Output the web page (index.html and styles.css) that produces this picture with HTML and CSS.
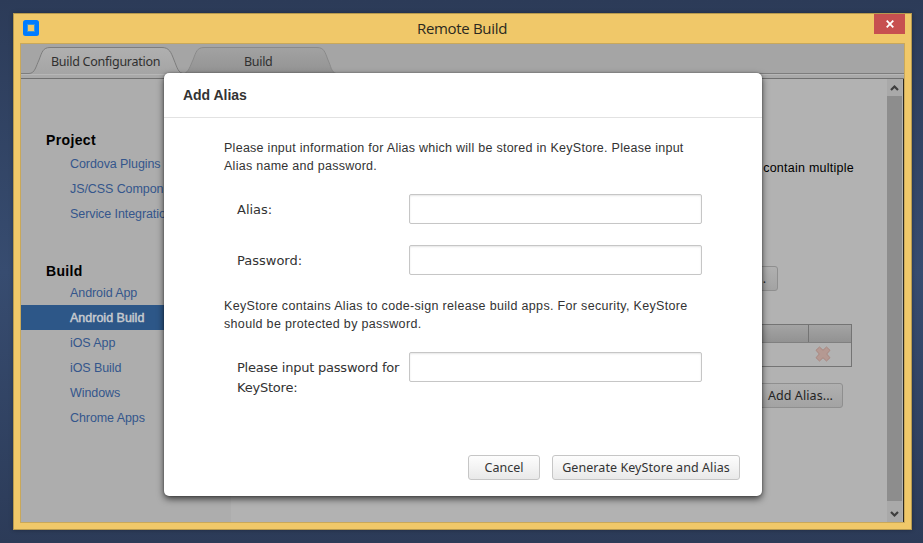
FILE: index.html
```html
<!DOCTYPE html>
<html lang="en">
<head>
<meta charset="utf-8">
<title>Remote Build</title>
<link rel="stylesheet" href="styles.css">
</head>
<body>
<div class="window">
  <header class="titlebar">
    <svg class="app-icon" width="16" height="16" viewBox="0 0 16 16"><rect width="16" height="16" rx="2.500" fill="#007cff"/><rect x="4.500" y="4.500" width="7" height="7" fill="#f0c869" stroke="#3c96d8"/></svg>
    <h1 class="window-title">Remote Build</h1>
    <button class="close" aria-label="Close"><svg width="8" height="8" viewBox="0 0 8 8"><path d="M.7.7l6.600 6.600M7.300.7L.7 7.300" stroke="#fff" stroke-width="1.800"/></svg></button>
  </header>
  <div class="client">
    <nav class="tabs">
      <svg class="tab-shapes" width="883" height="35" viewBox="0 0 883 35">
        <defs>
          <linearGradient id="active" x2="0" y2="1"><stop stop-color="#b0b0b0"/><stop offset="1" stop-color="#a5a5a5"/></linearGradient>
          <linearGradient id="idle" x2="0" y2="1"><stop stop-color="#a2a2a2"/><stop offset="1" stop-color="#939393"/></linearGradient>
        </defs>
        <rect y="30" width="883" height="4" fill="#a9a9a9"/>
        <path d="M163 29.500C168 28 169 22 172 16C175 8 176 3.500 183 3.500H296C303 3.500 304 8 307 16C310 22 310 28 315 29.500" fill="url(#idle)" stroke="#8a8a8a"/>
        <path d="M0 29.500H8C14 29.500 15 22 18 16C21 8 22 3.500 29 3.500H141C148 3.500 150 8 153 16C156 23 157 29.500 163 29.500H883" fill="url(#active)" stroke="#7d7d7d"/>
        <path d="M0 30.500H883" stroke="#b7b7b7"/>
        <path d="M0 34.500H883" stroke="#707070"/>
      </svg>
      <span class="tab tab-config">Build Configuration</span>
      <span class="tab tab-build">Build</span>
    </nav>
    <div class="workspace">
      <aside class="sidebar">
        <section class="group">
          <h2>Project</h2>
          <a>Cordova Plugins</a>
          <a>JS/CSS Compon</a>
          <a>Service Integratio</a>
        </section>
        <section class="group build">
          <h2>Build</h2>
          <a>Android App</a>
          <a class="selected">Android Build</a>
          <a>iOS App</a>
          <a>iOS Build</a>
          <a>Windows</a>
          <a>Chrome Apps</a>
        </section>
      </aside>
      <main class="content">
        <p class="hint">contain multiple</p>
        <button class="btn dim more">.</button>
        <div class="table">
          <div class="table-head"><span></span><span></span></div>
          <div class="table-row"><svg width="16" height="16" viewBox="0 0 16 16"><path d="M4.500 1L8 4.300 11.500 1 15 4.300 11.700 8 15 11.700 11.500 15 8 11.700 4.500 15 1 11.700 4.300 8 1 4.300Z" fill="#b59992" stroke="#a98780" stroke-linejoin="round"/></svg></div>
        </div>
        <button class="btn dim add">Add Alias...</button>
      </main>
      <div class="scrollbar">
        <svg class="up" width="15" height="17" viewBox="0 0 15 17"><path d="M4 11L7.500 7.500 11 11" fill="none" stroke="#3e3e3e" stroke-width="2.200"/></svg>
        <svg class="down" width="15" height="21" viewBox="0 0 15 21"><path d="M4 11L7.500 14.500 11 11" fill="none" stroke="#3e3e3e" stroke-width="2.200"/></svg>
      </div>
    </div>
  </div>
</div>
<div class="dialog" role="dialog">
  <h2 class="dialog-title">Add Alias</h2>
  <div class="dialog-body">
    <p class="intro">Please input information for Alias which will be stored in KeyStore. Please input<br>Alias name and password.</p>
    <label class="field"><span>Alias:</span><input type="text"></label>
    <label class="field second"><span>Password:</span><input type="password"></label>
    <p class="note">KeyStore contains Alias to code-sign release build apps. For security, KeyStore<br>should be protected by password.</p>
    <label class="field third"><span>Please input password for<br>KeyStore:</span><input type="password"></label>
  </div>
  <footer class="actions">
    <button class="btn cancel">Cancel</button>
    <button class="btn generate">Generate KeyStore and Alias</button>
  </footer>
</div>
</body>
</html>
```
FILE: styles.css
```css
* { box-sizing: border-box; }
h1, h2, p { margin: 0; font-weight: normal; }
body {
  margin: 0;
  padding: 13px 11px 13px 13px;
  height: 543px;
  overflow: hidden;
  background: linear-gradient(#2c3b58, #374c70 50%, #2c3b58);
  font: 12.500px/18px "Liberation Sans", sans-serif;
}
button { padding: 0; margin: 0; }
.window {
  height: 517px;
  border: 1px solid #b6994e;
  background: #f0c869;
  padding: 0 6px 6px;
  box-shadow: 0 0 4px rgba(0, 0, 0, .3);
}
.titlebar {
  display: flex;
  height: 29px;
  padding-left: 3px;
}
.app-icon { margin-top: 6px; }
.window-title {
  flex: 1;
  padding-left: 11px;
  font: 15px/28px "Open Sans", sans-serif;
  letter-spacing: -.32px;
  text-align: center;
  color: #2b2820;
}
.close {
  width: 31px;
  height: 20px;
  display: grid;
  place-items: center;
  border: 0;
  background: #c75050;
}
.client {
  height: 480px;
  border: 1px solid #c9a85a;
  background: #adadad;
}
.tabs {
  display: grid;
  grid-template-columns: 140px 193px 1fr;
  height: 35px;
  background: #a5a5a5;
}
.tab-shapes { grid-area: 1 / 1 / 2 / 4; }
.tab {
  grid-row: 1;
  font: 12.500px/18px "Noto Sans", sans-serif;
  color: #303030;
  padding-top: 9px;
  z-index: 1;
}
.tab-config {
  grid-column: 1;
  padding-left: 30px;
  letter-spacing: -.27px;
  white-space: nowrap;
}
.tab-build { grid-column: 2; padding-left: 83px; letter-spacing: -.3px; }
.workspace {
  display: flex;
  height: 443px;
  background: #b2b2b2;
}
.sidebar {
  width: 210px;
  padding-top: 50px;
  background: #adadad;
}
.group { height: 131px; }
.group h2 {
  height: 22px;
  padding-left: 25px;
  font: bold 14px/22px "Liberation Sans", sans-serif;
  letter-spacing: .35px;
  color: #000;
}
.group.build h2 { height: 20px; }
.group a {
  display: block;
  height: 25px;
  padding-left: 49px;
  line-height: 26px;
  letter-spacing: -.08px;
  color: #34568c;
}
.group a.selected {
  background: #2d5788;
  color: #c5c9ce;
  letter-spacing: 0;
  -webkit-text-stroke: .5px #c5c9ce;
}
.content {
  flex: 1;
  display: flex;
  flex-direction: column;
  align-items: flex-end;
  padding: 80px 35px 0 0;
}
.hint {
  height: 107px;
  margin-right: -2px;
  letter-spacing: .25px;
  color: #000;
}
.btn {
  height: 25px;
  border: 1px solid #c6c6c6;
  border-radius: 3px;
  background: linear-gradient(#fdfdfd, #e9e9e9);
  font: 12.500px/22px "Noto Sans", sans-serif;
  color: #333;
  white-space: nowrap;
}
.dim {
  border-color: #8f8f8f;
  background: linear-gradient(#b0b0b0, #a3a3a3);
  color: #242424;
}
.more {
  width: 90px;
  margin-right: 74px;
  padding-right: 11px;
  text-align: right;
}
.table {
  width: 500px;
  height: 43px;
  margin-top: 33px;
  border: 1px solid #747474;
}
.table-head {
  display: flex;
  justify-content: flex-end;
  height: 18px;
  border-bottom: 1px solid #808080;
  background: linear-gradient(#a4a4a4, #929292);
}
.table-head span:last-child {
  width: 43px;
  border-left: 1px solid #747474;
}
.table-row { text-align: right; padding: 3px 20px 0 0; }
.table-row svg { display: inline-block; }
.add {
  width: 100px;
  margin: 16px 9px 0 0;
  padding-right: 9px;
  letter-spacing: .08px;
  text-align: right;
}
.scrollbar {
  width: 17px;
  display: flex;
  flex-direction: column;
  justify-content: space-between;
  border-right: 1px solid #2c2820;
  background: linear-gradient(90deg, #8d8d8d 15px, #b2b2b2 15px);
}
.scrollbar svg { display: block; background: #a9a9a9; }
.dialog {
  position: absolute;
  left: 164px;
  top: 73px;
  width: 598px;
  height: 423px;
  border-radius: 5px;
  background: #fff;
  box-shadow: 0 3px 7px rgba(0, 0, 0, .65), 0 0 2px rgba(0, 0, 0, .4);
  color: #333;
}
.dialog-title {
  height: 45px;
  padding-left: 19px;
  border-bottom: 1px solid #e2e2e2;
  font: bold 14px/45px "Liberation Sans", sans-serif;
  letter-spacing: -.02px;
}
.dialog-body { padding: 21px 60px 0; height: 337px; white-space: nowrap; }
.intro { letter-spacing: .27px; }
.field {
  display: flex;
  height: 30px;
  margin-top: 19px;
  padding-left: 13px;
}
.field span {
  width: 172px;
  padding-top: 6px;
  font: 13px/20px "DejaVu Sans", sans-serif;
}
.field input {
  width: 293px;
  height: 30px;
  border: 1px solid #c6c6c6;
  border-radius: 2px;
  background: #fff;
  box-shadow: inset 0 1px 2px rgba(0, 0, 0, .1);
}
.field.second { margin-top: 21px; }
.note { margin-top: 22px; letter-spacing: .33px; }
.field.third span { letter-spacing: -.22px; }
.actions {
  display: flex;
  justify-content: flex-end;
  gap: 12px;
  padding-right: 22px;
}
.cancel { width: 72px; }
.generate { width: 188px; letter-spacing: .07px; }
```
